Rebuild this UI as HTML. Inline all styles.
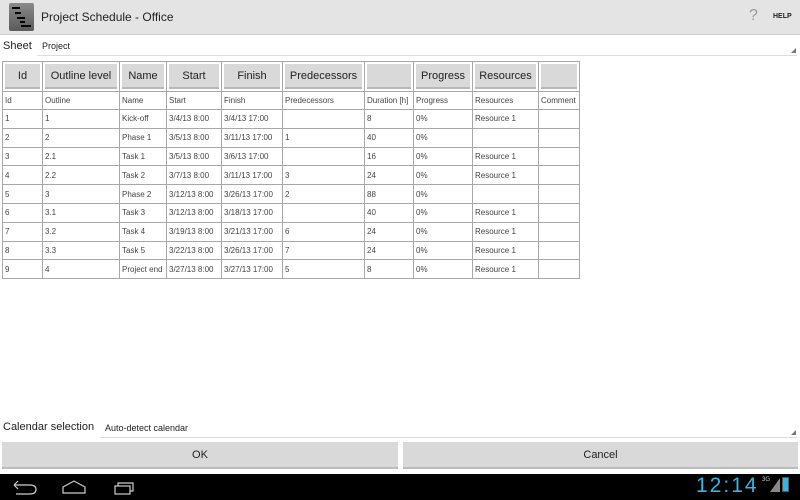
<!DOCTYPE html>
<html><head><meta charset="utf-8"><style>
*{margin:0;padding:0;box-sizing:border-box}
body{width:800px;height:500px;overflow:hidden;background:#fff;font-family:"Liberation Sans",sans-serif;position:relative;color:#222}
.abs{position:absolute}
#top{left:0;top:0;width:800px;height:35px;background:#e4e4e4;border-bottom:1px solid #ccc}
table{position:absolute;left:2px;top:61px;border-collapse:collapse;table-layout:fixed}
td{border:1px solid #a8a8a8;font-size:8px;color:#444;padding:0 0 0 2px;white-space:nowrap;overflow:hidden;height:18.8px}
tr.h td{height:30px;padding:2px}
tr.l td{height:18px}
.b{background:#d9d9d9;border-bottom:2px solid #b8b8b8;height:25px;font-size:11px;color:#222;text-align:center;line-height:24px}
.btn{top:442px;height:27px;background:#d9d9d9;border-bottom:2px solid #bbb;font-size:11px;text-align:center;line-height:26px;color:#222}
#nav{left:0;top:474px;width:800px;height:26px;background:#000}
</style></head><body>
<div id="top" class="abs"></div>
<div class="abs" style="left:9px;top:3px;width:25px;height:28px;background:linear-gradient(#8a8a8a,#5a5a5a);border-radius:2px">
<div class="abs" style="left:3px;top:4px;width:8px;height:2px;background:#000"></div>
<div class="abs" style="left:6px;top:9px;width:6px;height:2px;background:#000"></div>
<div class="abs" style="left:8px;top:14px;width:8px;height:2px;background:#000"></div>
<div class="abs" style="left:11px;top:18px;width:5px;height:2px;background:#000"></div>
<div class="abs" style="left:12px;top:22px;width:10px;height:2px;background:#000"></div>
</div>
<div class="abs" style="left:41px;top:10px;font-size:12px;color:#222">Project Schedule - Office</div>
<div class="abs" style="left:749px;top:7px;font-size:16px;color:#999">?</div>
<div class="abs" style="left:773px;top:13px;font-size:7px;font-weight:bold;color:#222">HELP</div>
<div class="abs" style="left:3px;top:40px;font-size:11px">Sheet</div>
<div class="abs" style="left:42px;top:41px;font-size:9px">Project</div>
<div class="abs" style="left:37px;top:55px;width:760px;height:1px;background:#ddd"></div>
<div class="abs" style="left:791px;top:48px;width:0;height:0;border-left:5px solid transparent;border-bottom:5px solid #777"></div>
<table>
<colgroup><col style="width:40px"><col style="width:77px"><col style="width:47px"><col style="width:55px"><col style="width:61px"><col style="width:82px"><col style="width:49px"><col style="width:59px"><col style="width:66px"><col style="width:41px"></colgroup>
<tr class="h"><td><div class="b">Id</div></td><td><div class="b">Outline level</div></td><td><div class="b">Name</div></td><td><div class="b">Start</div></td><td><div class="b">Finish</div></td><td><div class="b">Predecessors</div></td><td><div class="b"></div></td><td><div class="b">Progress</div></td><td><div class="b">Resources</div></td><td><div class="b"></div></td></tr>
<tr class="l"><td>Id</td><td>Outline</td><td>Name</td><td>Start</td><td>Finish</td><td>Predecessors</td><td>Duration [h]</td><td>Progress</td><td>Resources</td><td>Comment</td></tr>
<tr><td>1</td><td>1</td><td>Kick-off</td><td>3/4/13 8:00</td><td>3/4/13 17:00</td><td></td><td>8</td><td>0%</td><td>Resource 1</td><td></td></tr>
<tr><td>2</td><td>2</td><td>Phase 1</td><td>3/5/13 8:00</td><td>3/11/13 17:00</td><td>1</td><td>40</td><td>0%</td><td></td><td></td></tr>
<tr><td>3</td><td>2.1</td><td>Task 1</td><td>3/5/13 8:00</td><td>3/6/13 17:00</td><td></td><td>16</td><td>0%</td><td>Resource 1</td><td></td></tr>
<tr><td>4</td><td>2.2</td><td>Task 2</td><td>3/7/13 8:00</td><td>3/11/13 17:00</td><td>3</td><td>24</td><td>0%</td><td>Resource 1</td><td></td></tr>
<tr><td>5</td><td>3</td><td>Phase 2</td><td>3/12/13 8:00</td><td>3/26/13 17:00</td><td>2</td><td>88</td><td>0%</td><td></td><td></td></tr>
<tr><td>6</td><td>3.1</td><td>Task 3</td><td>3/12/13 8:00</td><td>3/18/13 17:00</td><td></td><td>40</td><td>0%</td><td>Resource 1</td><td></td></tr>
<tr><td>7</td><td>3.2</td><td>Task 4</td><td>3/19/13 8:00</td><td>3/21/13 17:00</td><td>6</td><td>24</td><td>0%</td><td>Resource 1</td><td></td></tr>
<tr><td>8</td><td>3.3</td><td>Task 5</td><td>3/22/13 8:00</td><td>3/26/13 17:00</td><td>7</td><td>24</td><td>0%</td><td>Resource 1</td><td></td></tr>
<tr><td>9</td><td>4</td><td>Project end</td><td>3/27/13 8:00</td><td>3/27/13 17:00</td><td>5</td><td>8</td><td>0%</td><td>Resource 1</td><td></td></tr>
</table>
<div class="abs" style="left:3px;top:421px;font-size:11px">Calendar selection</div>
<div class="abs" style="left:105px;top:423px;font-size:9px">Auto-detect calendar</div>
<div class="abs" style="left:100px;top:437px;width:697px;height:1px;background:#ddd"></div>
<div class="abs" style="left:791px;top:430px;width:0;height:0;border-left:5px solid transparent;border-bottom:5px solid #777"></div>
<div class="abs btn" style="left:2px;width:396px">OK</div>
<div class="abs btn" style="left:403px;width:395px">Cancel</div>
<div id="nav" class="abs"></div>
<svg class="abs" style="left:0;top:474px" width="140" height="26">
<path d="M14 11 L30 11 Q36 11 36 15.5 Q36 20 30 20 L16 20 M14 11 L18 7 M14 11 L18 15" stroke="#ccc" stroke-width="1.2" fill="none"/>
<path d="M63 19 L63 13 L74 7 L85 13 L85 19 Z" stroke="#ccc" stroke-width="1.2" fill="none"/>
<rect x="115" y="12" width="15" height="8" stroke="#ccc" stroke-width="1.2" fill="none"/>
<path d="M118 12 L118 9 L133 9 L133 17 L130 17" stroke="#ccc" stroke-width="1.2" fill="none"/>
</svg>
<div class="abs" style="left:696px;top:474px;font-size:21px;color:#33b5e5;letter-spacing:2px;line-height:24px">12:14</div>
<div class="abs" style="left:762px;top:477px;font-size:6px;color:#ccc">3G</div>
<div class="abs" style="left:770px;top:478px;width:0;height:0;border-left:10px solid transparent;border-bottom:14px solid #888"></div>
<div class="abs" style="left:782px;top:477px;width:7px;height:15px;background:#33b5e5;border:1px solid #555"></div>
</body></html>
